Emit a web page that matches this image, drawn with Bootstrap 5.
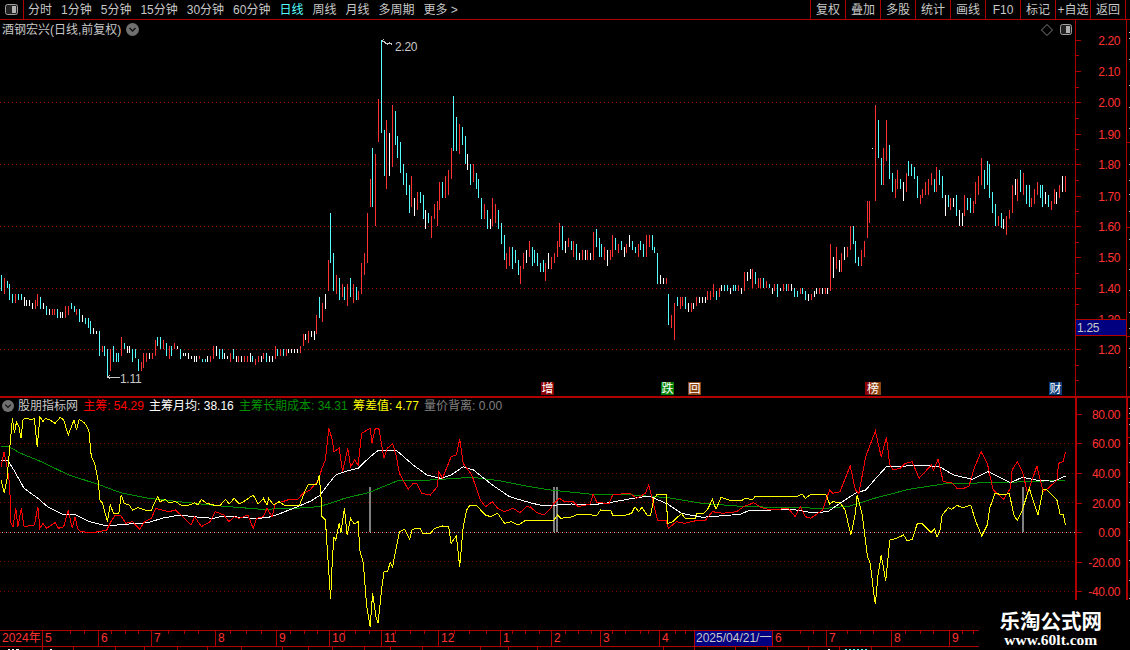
<!DOCTYPE html>
<html lang="zh-CN">
<head>
<meta charset="utf-8">
<title>K线</title>
<link href="https://cdn.jsdelivr.net/npm/bootstrap@5.3.0/dist/css/bootstrap.min.css" rel="stylesheet">
<style>
html,body{margin:0;height:650px;overflow:hidden;background:#000}
body,svg text{font-family:"Liberation Sans","Noto Sans CJK SC",sans-serif;font-size:12px}
.shell{width:1130px;height:650px;overflow:hidden;background:#000;color:#c8c8c8;line-height:1}
.topbar{height:20px;border-bottom:1px solid #b00000;flex:none}
.side-btn{width:24px;border-right:1px solid #b00000}
.tabs{--bs-nav-link-padding-x:0;--bs-nav-link-padding-y:0;--bs-nav-link-color:#c8c8c8;--bs-nav-link-hover-color:#c8c8c8;--bs-nav-link-font-size:12px;gap:9px;padding-left:4px;flex-wrap:nowrap}
.tabs .nav-link.on{color:#54ffff}
.tool{width:35px;border-left:1px solid #b00000;text-align:center;white-space:nowrap}
.tool.tail{width:5px}
.price-pane{height:376px;flex:none}
.ind-pane{height:234px;flex:none;border-top:2px solid #b00000}
.canvas{position:absolute;left:0;top:0;display:block}
.pane-head{position:relative;height:19px;padding-left:2px;gap:5px;z-index:1}
.legend{height:15px;gap:5.2px;white-space:nowrap;padding-left:2px}
.legend .dot{margin-right:-1.2px}
.datebar{width:979px;height:17px;flex:none;border-top:1px solid #b00000;border-bottom:1px solid #b00000;color:#ff3232;position:relative}
.dcell{border-left:1px solid #b00000;padding-left:2px;flex:none;line-height:15px;white-space:nowrap;overflow:hidden}
.dcell:first-child{border-left:0}
.dcell.cur{background:#000080;color:#c8c8c8;padding-left:1px}
.tail-row{height:3px;flex:none;display:block}
.wm{position:absolute;right:28px;bottom:1px;text-align:center;color:#fff;font-weight:700}
.wm-a{font-family:"Noto Sans CJK SC",sans-serif;font-size:20.5px;line-height:22px}
.wm-b{font-family:"Liberation Serif",serif;font-size:15.5px;line-height:18px}
.t-red{color:#f00}.t-white{color:#fff}.t-green{color:#009000}.t-yellow{color:#ff0}.t-gray{color:#808080}
</style>
</head>
<body>
<div class="shell position-relative d-flex flex-column">
  <div class="topbar d-flex align-items-stretch">
    <div class="side-btn d-flex align-items-center justify-content-center">
      <svg width="13" height="11" viewBox="0 0 13 11"><rect x=".5" y=".5" width="12" height="10" rx="2" fill="#222" stroke="#a0a0a0"/><rect x="7" y="2" width="4" height="7" fill="#b0b0b0"/></svg>
    </div>
    <ul class="nav tabs align-items-center">
      <li class="nav-item"><a class="nav-link" href="#">分时</a></li>
      <li class="nav-item"><a class="nav-link" href="#">1分钟</a></li>
      <li class="nav-item"><a class="nav-link" href="#">5分钟</a></li>
      <li class="nav-item"><a class="nav-link" href="#">15分钟</a></li>
      <li class="nav-item"><a class="nav-link" href="#">30分钟</a></li>
      <li class="nav-item"><a class="nav-link" href="#">60分钟</a></li>
      <li class="nav-item"><a class="nav-link on" href="#">日线</a></li>
      <li class="nav-item"><a class="nav-link" href="#">周线</a></li>
      <li class="nav-item"><a class="nav-link" href="#">月线</a></li>
      <li class="nav-item"><a class="nav-link" href="#">多周期</a></li>
      <li class="nav-item"><a class="nav-link" href="#">更多 &gt;</a></li>
    </ul>
    <div class="d-flex ms-auto align-items-stretch">
      <div class="tool d-flex align-items-center justify-content-center">复权</div>
      <div class="tool d-flex align-items-center justify-content-center">叠加</div>
      <div class="tool d-flex align-items-center justify-content-center">多股</div>
      <div class="tool d-flex align-items-center justify-content-center">统计</div>
      <div class="tool d-flex align-items-center justify-content-center">画线</div>
      <div class="tool d-flex align-items-center justify-content-center">F10</div>
      <div class="tool d-flex align-items-center justify-content-center">标记</div>
      <div class="tool d-flex align-items-center justify-content-center">+自选</div>
      <div class="tool d-flex align-items-center justify-content-center">返回</div>
      <div class="tool tail"></div>
    </div>
  </div>

  <div class="price-pane position-relative">
    <svg class="canvas" id="pv" width="1130" height="376" viewBox="0 20 1130 376"></svg>
    <div class="pane-head d-flex align-items-center">
      <span>酒钢宏兴(日线,前复权)</span>
      <svg width="13" height="13" viewBox="0 0 13 13"><circle cx="6.5" cy="6.5" r="6.5" fill="#707070"/><path d="M3.5 5l3 3 3-3" fill="none" stroke="#111" stroke-width="1.4"/></svg>
    </div>
  </div>

  <div class="ind-pane position-relative">
    <svg class="canvas" id="iv" width="1130" height="232" viewBox="0 398 1130 232"></svg>
    <div class="pane-head legend d-flex align-items-center">
      <svg class="dot" width="12" height="12" viewBox="0 0 13 13"><circle cx="6.5" cy="6.5" r="6.5" fill="#707070"/><path d="M3.5 5l3 3 3-3" fill="none" stroke="#111" stroke-width="1.4"/></svg>
      <span>股朋指标网</span>
      <span class="t-red">主筹: 54.29</span>
      <span class="t-white">主筹月均: 38.16</span>
      <span class="t-green">主筹长期成本: 34.31</span>
      <span class="t-yellow">筹差值: 4.77</span>
      <span class="t-gray">量价背离: 0.00</span>
    </div>
  </div>

  <div class="datebar d-flex" id="dates"></div>
  <svg class="tail-row" id="tail" width="1130" height="3" viewBox="0 647 1130 3"></svg>

  <div class="wm">
    <div class="wm-a">乐淘公式网</div>
    <div class="wm-b">www.60lt.com</div>
  </div>
</div>

<script>
var NS='http://www.w3.org/2000/svg';
var AR='#b00000',LB='#ff3232';
function add(p,tag,at,txt){var e=document.createElementNS(NS,tag);for(var k in at)e.setAttribute(k,at[k]);if(txt!=null)e.textContent=txt;p.appendChild(e);return e}
function line(p,x1,y1,x2,y2,c,extra){var a={x1:x1,y1:y1,x2:x2,y2:y2,stroke:c,'shape-rendering':'crispEdges'};for(var k in extra||{})a[k]=extra[k];return add(p,'line',a)}
var pv=document.getElementById('pv'),iv=document.getElementById('iv');

/* price grid */
[102.5,164.5,226.5,288.5,349.5].forEach(function(y){line(pv,0,y,1075,y,'#a00000',{'stroke-dasharray':'1 3'})});

/* price bars: zoomX colour top,bottom */
var Z7="4c45,92 13r55,102 22c63,84 28c72,120 37c102,128 46r102,130 55c102,120 64c102,120 72w112,138 80w120,138 88w120,138 97w128,147 105r120,147 113r102,138 122c111,147 130w128,147 139c138,165 147w147,165 156r147,165 164r147,165 172c147,174 180w156,174 188w156,174 197r138,174 205r138,165 214c130,147 222c138,156 230r147,165 238c147,186 248w165,186 256c174,192 264c174,204 272c183,221 281w205,222 290w213,222 298c213,287 307r258,277 314c258,287 323c268,352 331r268,333 340c258,305 348c278,305 356c278,305 364r231,287 373c250,268 381w258,278 389w258,278 398c268,305 406c268,295 415c296,333 424r305,333 431r278,324 439r278,305 448w278,296 457r278,296 465r240,287 472c232,259 481c232,268 490r240,268 499c250,287 507r258,296 515c258,287 523r250,268 532w258,268 541c268,296 549w278,287 557w278,287 565w278,296 574w287,296 582w287,305 590w287,305 598r287,296 607c296,305 615c296,305 623w287,305 631r287,305 640r258,296 649w258,287 657c268,296 667c268,296 673w278,296 682w287,296 691r278,305 699c268,296 708w287,305 716r287,305 724w287,305 733r287,305 742r287,305 750w278,305 758c287,305 766r296,314 775r287,305 783w287,305 791r278,296 800c278,305 808w287,305 816w287,305 825r258,296 833c268,287 841r268,287 849c268,287 858r268,287 866w268,278 874w268,278 883w268,278 891w268,278 900r259,278 909r222,259 917w222,240 925r213,250 934w213,230 942w213,240 950r166,222 958c111,175 966r130,185 976w102,148";
var Z8="25r690,784 31c549,698 40c670,782 49r736,792 58c744,810 67r762,802 73c772,810 82r762,828 91c744,802 100r762,820 108c772,810 115r784,810 124r698,792 133r670,735 142r549,698 151r447,530 157c354,530 166r372,588 175r207,335 184c30,308 193c300,438 199r270,476 208w308,438 217r225,410 226c243,345 232c318,384 241c336,428 250c402,465 259c430,494 268c465,548 274r438,530 283w504,558 292r486,540 301c486,520 310c495,566 316w540,596 325c549,578 334r558,624 343r522,568 352r513,588 358r456,540 367c456,504 376r438,504 385r420,495 394r354,447 400c198,362 409c261,362 418r282,372 427c291,345 436c318,402 442w372,420 451c402,465 460r402,457 469c430,476 475c447,504 484c504,566 493r522,568 502c540,596 511w567,596 517r504,588 526r522,578 535c540,596 544c578,642 553c615,690 559r669,716 568r651,708 577c651,716 586c660,698 595c690,735 601r708,762 610r669,716 619w660,698 628r633,680 637c651,708 643c660,698 652c669,708 661c698,726 670c690,726 676r698,752 685w669,716 694r680,716 703r669,698 712r633,680 718r579,651 727c588,660 736w633,668 745r624,652 754c633,660 760r633,680 769c642,690 778w669,690 787r660,690 796w660,690 802r660,690 811w669,690 820r606,690 829c597,651 838c624,680 844c642,680 853r651,690 862w660,708 871r660,690 877r615,680 886c624,660 895r642,668 904c633,660 913w651,680 919r642,668 928w615,650 937c633,660 946c651,668 955r642,680 961c633,660 970c642,680 979r615,680 988r615,650 997c615,660 1003c651,668 1012c669,762 1021w735,762 1030w744,762 1039r744,762";
var Z9="25c612,705 34r675,714 43r639,750 52c621,648 61r621,657 67r621,648 76c621,657 85w639,666 94r639,666 100w639,657 109r621,648 118w621,639 127w621,639 136w621,639 142r603,630 151r603,630 160r582,621 169c603,630 178r594,621 184w585,603 193c585,603 202c585,603 211w594,612 220c585,603 226c585,603 235r585,603 244w594,612 253r546,603 262w546,573 271w537,567 277r537,594 286c546,582 295r564,594 301r564,594 310c564,594 319r573,594 328c582,594 337w594,612 343r582,603 352c582,621 361w594,603 370r582,603 379c582,603 385r582,603 394w582,603 403c594,621 412c603,621 421r594,612 427c594,612 436c603,630 445w612,633 454r612,630 463w603,621 469w594,612 478r594,612 487w594,612 496r594,612 502w594,612 511r462,603 520w501,564 529r471,537 538w510,546 544r489,546 553w471,510 562r471,501 571r408,480 580c408,462 586c453,519 595c501,528 604r480,528 613r453,501 622r333,444 628r333,400 637w175,177 646r45,333 655c90,204 664c204,285 670r174,285 679r90,213 688c165,267 697c249,306 706r267,324 712r240,297 721c267,297 730w276,333 739r249,306 745c213,258 754c222,258 763c231,267 772c258,324 781r315,342 787r297,324 796r276,315 805r267,315 814r249,285 823c267,306 829r231,306 838c240,285 847c258,324 856w315,378 865c315,351 871r324,360 880w324,351 889c315,378 898w360,408 907w369,408 913r315,378 922c324,360 931c324,369 940r333,369 946r276,342 955r258,315 964r204,285 973c240,297 982c213,285 988c222,324 997c306,369 1006c342,408 1015r378,408 1024c369,414 1030w387,417 1039r378,435 1048r360,387 1057r285,369 1066w267,315 1072r267,333 1081c240,306 1090r249,315 1099c285,342 1108c285,351 1114r324,351 1123r297,342 1132r276,315 1141c285,324 1147c285,351 1156w306,342 1165c315,351 1174r333,360 1183r297,342 1189w306,342 1198r285,324 1207w258,306 1216r258,306";
var COL={c:'#54ffff',r:'#ff3232',w:'#ffffff'};
function bars(s,ox,oy){s.split(' ').forEach(function(t){var m=t.match(/^(\d+)([crw])(\d+),(\d+)$/);var x=Math.floor(ox+m[1]/3)+.5;line(pv,x,oy+m[3]/3,x,oy+m[4]/3,COL[m[2]])})}
bars(Z7,0,260);bars(Z8,320,30);bars(Z9,660,90);

/* high / low tags */
add(pv,'path',{d:'M381.5 41h3M382 41l2-1.500M384.500 42.500l3 1.500 2-1 3 1.500',fill:'none',stroke:'#c8c8c8','shape-rendering':'crispEdges'});
add(pv,'text',{x:395,y:50.500,fill:'#c8c8c8','font-size':13,'letter-spacing':'-.3'},'2.20');
add(pv,'path',{d:'M107.500 377h12M107.500 377l3-2.500M107.500 377l3 2.500',fill:'none',stroke:'#c8c8c8','shape-rendering':'crispEdges'});
add(pv,'text',{x:120,y:382.500,fill:'#c8c8c8','font-size':13,'letter-spacing':'-.3'},'1.11');

/* event chips */
[[541,13,'#8b0000','增'],[661,13,'#008000','跌'],[688,13,'#8b4513','回'],[865,16,'#8b0000','榜'],[1049,13,'#0a3d7a','财']].forEach(function(m){
  add(pv,'rect',{x:m[0],y:382,width:m[1],height:13,fill:m[2]});
  if(m[3]=='榜')add(pv,'rect',{x:871,y:382,width:10,height:13,fill:'#8b4513'});
  add(pv,'text',{x:m[0]+m[1]/2,y:393,fill:'#fff','font-size':12,'text-anchor':'middle'},m[3]);
});

/* axes */
function axis(p,lab,yTop,yEnd){
  line(p,1075.5,yTop,1075.5,yEnd,AR);
  line(p,1126.5,yTop,1126.5,yEnd,AR);
  lab.forEach(function(l){
    line(p,1076,l[1]+.5,1081,l[1]+.5,AR);
    add(p,'text',{x:1120,y:l[1]+5,fill:LB,'font-size':13,'letter-spacing':'-.4','text-anchor':'end'},l[0]);
  });
}
axis(pv,[['2.20',40],['2.10',71],['2.00',102],['1.90',134],['1.80',164],['1.70',196],['1.60',226],['1.50',257],['1.40',288],['1.30',319],['1.20',349]],20,396);
[55,87,118,149,180,211,242,273,304,334,365,380].forEach(function(y){line(pv,1076,y+.5,1079,y+.5,AR)});
add(pv,'rect',{x:1075.5,y:319.5,width:51,height:16,fill:'#000080',stroke:AR,'shape-rendering':'crispEdges'});
add(pv,'text',{x:1077,y:332,fill:'#c8c8c8','font-size':13,'letter-spacing':'-.3'},'1.25');
[142,227,336].forEach(function(y){line(pv,1127,y+.5,1130,y+.5,AR)});
[32,38,59,85,107,128,164,180,194,211,239,269,290,312,328,348,367].forEach(function(y){line(pv,1129,y+.5,1130,y+.5,'#c0c0c0')});
add(pv,'path',{d:'M1047 24.500l5.500 5.500-5.500 5.500-5.500-5.500z',fill:'none',stroke:'#808080'});
add(pv,'rect',{x:1060.500,y:24.500,width:11,height:10,rx:2,fill:'#222',stroke:'#a0a0a0'});
add(pv,'rect',{x:1066,y:26,width:4,height:7,fill:'#b0b0b0'});

/* indicator pane */
[443.5,473.5,502.5,561.5,591.5].forEach(function(y){line(iv,0,y,1075,y,'#800000',{'stroke-dasharray':'1 3'})});
line(iv,0,532.5,1075,532.5,'#a00000',{'stroke-dasharray':'1 3'});
line(iv,2,532.5,1075,532.5,'#c0c0c0',{'stroke-dasharray':'1 3'});
[370,554,557,1023].forEach(function(x){line(iv,x,487,x,532,'#808080',{'stroke-width':2})});
var L={
 green:{c:'#008f00',a:"3,140 25,140 60,160 120,185 200,225 290,255 350,278 430,295 520,305 640,318 760,328 860,325 925,320 960,310 1000,295 1070,278 1160,240 1250,240 1370,232 1450,242",b:"0,260 60,270 180,283 300,285 400,293 500,310 600,318 700,322 860,325 930,318 1000,295 1100,268 1200,252 1330,248 1450,245 1555,240"},
 white:{c:'#ffffff',a:"3,180 22,180 40,210 70,265 110,295 140,322 180,342 220,345 260,365 300,375 340,375 400,370 430,368 470,355 520,345 580,352 620,355 650,348 700,352 745,356 780,352 810,342 860,322 905,302 930,285 955,250 975,225 1000,215 1040,205 1075,170 1100,150 1150,150 1200,195 1240,225 1280,235 1310,225 1345,200 1375,210 1430,255 1480,290",b:"0,308 40,318 120,312 175,315 230,308 300,295 345,288 400,312 440,340 500,352 550,348 610,343 640,330 700,330 760,328 820,338 865,335 900,310 945,280 975,270 1000,240 1035,200 1075,200 1120,195 1190,200 1230,225 1285,238 1330,215 1395,248 1430,232 1470,240 1520,244 1555,228"},
 red:{c:'#ff0000',a:"3,200 12,155 20,200 28,250 32,370 38,380 46,325 52,380 62,325 70,380 100,375 110,320 116,385 125,370 135,385 160,368 170,385 185,380 198,330 210,385 218,350 225,385 235,395 270,398 310,390 322,365 335,345 350,345 365,370 385,365 405,388 420,365 440,355 452,325 470,330 490,335 510,330 530,350 555,375 565,350 585,380 610,365 625,335 650,345 665,365 680,350 695,355 720,345 735,385 745,355 765,350 775,325 790,350 800,310 820,305 835,300 865,298 880,280 900,270 925,240 935,205 945,180 955,85 965,120 970,155 985,145 995,215 1010,145 1018,200 1030,180 1040,195 1050,100 1075,85 1080,130 1090,85 1100,85 1115,175 1125,145 1140,130 1150,165 1160,220 1185,268 1200,250 1210,250 1225,280 1250,285 1270,260 1275,215 1285,235 1310,170 1325,165 1335,118 1345,190 1370,225 1395,300 1410,320 1430,305 1445,325 1465,335 1490,325 1510,338 1530,318 1545,325",b:"0,320 20,338 40,345 60,325 70,310 85,295 100,305 125,305 140,320 175,312 183,282 195,308 230,310 240,285 265,282 290,280 310,295 335,280 345,255 355,295 370,360 395,360 402,385 425,365 450,370 490,360 510,360 530,335 560,340 600,335 620,320 650,308 670,322 700,330 750,325 770,350 785,320 800,350 815,355 850,330 870,270 880,280 900,275 930,198 945,270 955,280 975,170 1003,93 1020,170 1035,112 1045,195 1055,210 1075,205 1090,190 1110,185 1130,235 1165,195 1172,210 1185,178 1200,245 1225,248 1240,265 1260,265 1275,258 1290,205 1310,155 1328,190 1345,270 1375,298 1395,265 1400,210 1415,185 1430,215 1445,280 1472,198 1490,275 1505,265 1530,240 1535,190 1548,185 1555,155"},
 yellow:{c:'#ffff00',a:"3,240 12,278 20,240 30,125 36,55 42,100 48,65 55,80 61,115 67,58 80,55 90,60 100,55 108,140 116,50 125,65 132,55 145,60 160,70 175,52 185,60 198,105 215,60 222,90 230,58 245,68 258,90 265,170 275,190 285,240 290,300 298,310 312,365 320,315 330,340 345,340 352,285 360,310 375,315 385,330 400,323 420,330 440,330 450,305 458,290 465,305 480,298 490,308 510,305 525,315 550,315 565,308 575,315 585,298 600,310 620,315 640,315 655,298 665,312 680,295 695,312 715,300 735,285 750,312 765,295 775,315 780,295 795,315 810,305 825,315 870,315 885,275 895,253 920,253 927,225 933,300 935,350 945,360 955,520 960,598 965,480 970,410 975,420 985,370 990,400 1000,325 1008,405 1018,355 1028,372 1040,365 1045,450 1055,490 1065,620 1075,680 1082,580 1092,650 1098,670 1108,570 1115,515 1125,515 1133,488 1140,500 1160,395 1175,388 1190,418 1197,388 1220,385 1228,400 1250,400 1262,385 1285,378 1303,380 1310,430 1325,408 1335,500 1345,380 1355,330 1365,316 1385,318 1410,345 1425,350 1445,340 1465,370 1485,365 1505,375 1525,362",b:"0,362 70,360 80,345 90,355 125,350 140,342 180,345 195,345 205,330 235,332 240,345 280,345 295,340 305,320 315,335 325,322 340,345 350,345 360,295 370,282 395,282 400,370 415,365 440,340 450,355 480,355 485,340 505,340 515,330 530,298 540,328 555,292 585,302 615,302 625,294 645,300 655,288 700,288 735,290 780,288 790,282 800,295 815,283 860,285 870,312 880,305 900,308 915,330 932,405 945,340 950,285 965,345 980,470 988,490 1000,595 1003,612 1010,530 1020,465 1033,542 1045,420 1065,415 1085,405 1095,422 1110,418 1125,370 1140,372 1165,398 1175,385 1182,412 1190,395 1197,345 1215,323 1225,328 1240,316 1255,323 1280,316 1295,365 1312,408 1328,375 1335,325 1350,280 1375,285 1392,280 1405,345 1415,362 1428,335 1450,265 1475,345 1490,270 1500,268 1530,300 1540,345 1548,342 1555,375"}
};
function conv(s,ox){return s.split(' ').map(function(p){var q=p.split(',');return (ox+q[0]/2.904).toFixed(1)+','+(400+q[1]/3).toFixed(1)}).join(' ')}
Object.keys(L).forEach(function(k){var o=L[k];add(iv,'polyline',{points:conv(o.a,0)+' '+conv(o.b,530),fill:'none',stroke:o.c,'stroke-width':1,'shape-rendering':'crispEdges'})});

/* indicator axis */
line(iv,1076,398,1076,600,AR,{'stroke-width':2});
line(iv,1127,398,1127,600,AR,{'stroke-width':2});
[['80.00',414],['60.00',443],['40.00',473],['20.00',503],['0.00',532],['-20.00',562],['-40.00',591]].forEach(function(l){
  line(iv,1077,l[1]+.5,1082,l[1]+.5,AR);
  add(iv,'text',{x:1120,y:l[1]+5,fill:LB,'font-size':13,'letter-spacing':'-.4','text-anchor':'end'},l[0]);
});
[418,437].forEach(function(y){line(iv,1128,y+.5,1130,y+.5,AR)});
[408,413,424,443,462,482,502,522,540,560,580,598].forEach(function(y){line(iv,1129,y+.5,1130,y+.5,'#c0c0c0')});

/* date axis */
var D=[[0,'2024年'],[42,'5'],[98,'6'],[151,'7'],[215,'8'],[276,'9'],[329,'10'],[381,'11'],[438,'12'],[500,'1'],[551,'2'],[600,'3'],[659,'4'],[694,'2025/04/21/一',1],[772,'6'],[826,'7'],[891,'8'],[949,'9'],[979,'']];
var box=document.getElementById('dates');
for(var i=0;i<D.length-1;i++){var c=document.createElement('div');c.className='dcell'+(D[i][2]?' cur':'');c.style.width=(D[i+1][0]-D[i][0])+'px';c.textContent=D[i][1];box.appendChild(c)}
var tk=document.createElementNS(NS,'svg');tk.setAttribute('class','canvas');tk.setAttribute('width',979);tk.setAttribute('height',4);
[70,84,111,125,138,168,184,198,230,246,261,290,304,317,344,355,369,395,410,424,454,469,486,512,525,539,565,578,591,612,625,640,648,675,685,800,813,847,860,873,905,920,933,962,973].forEach(function(x){line(tk,x+.5,0,x+.5,3,AR)});
box.appendChild(tk);

/* clipped tab row */
var tl=document.getElementById('tail');
[42,73,115,144,177,207,241,282,308,332,364,390,422,480,508,537,663,694,735,767,808,839,871].forEach(function(x){line(tl,x+.5,647,x+.5,650,AR)});
[[8,10,'#fff'],[17,4,'#fff'],[50,3,'#fff'],[828,3,'#fff'],[845,22,'#54ffff']].forEach(function(b){line(tl,b[0],649.5,b[0]+b[1],649.5,b[2],{'stroke-dasharray':'2 2'})});
</script>
</body>
</html>
